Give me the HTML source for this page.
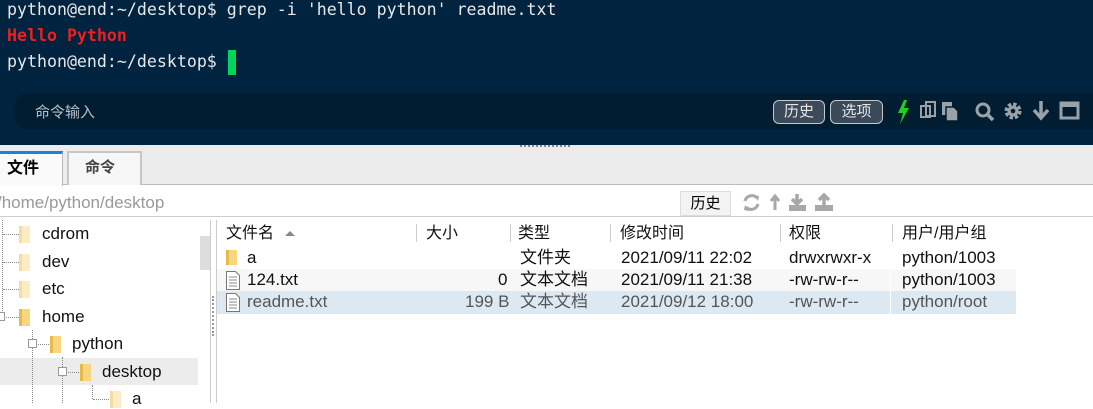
<!DOCTYPE html><html><head><meta charset="utf-8"><style>
*{margin:0;padding:0;box-sizing:border-box}
body{width:1093px;height:403px;overflow:hidden;background:#fff;position:relative;font-family:"Liberation Sans","Noto Sans CJK SC",sans-serif}
.a{position:absolute;white-space:nowrap;line-height:20px}
.term{left:0;top:0;width:1093px;height:145px;background:#00233f}
.mono{font-family:"DejaVu Sans Mono","Liberation Mono",monospace;font-size:16.6px;color:#e8e8e8}
.btn{border:1px solid #c8c8c8;border-radius:6px;background:#3a4a5a;color:#e6e6e6;font-size:15px;text-align:center;line-height:22px;height:24px}
.ic{fill:#9aa1a8}
.t{font-size:17px;color:#111}
.hd{font-size:16px;color:#111;top:224px}
.fold{position:absolute;width:11px;height:17px;background:linear-gradient(90deg,#e7b84a 0 3px,#f6d77f 3px)}
.fl{background:linear-gradient(90deg,#f3dca0 0 3px,#fbecc6 3px)}
.dot{position:absolute;border-top:1px dotted #888}
.dv{position:absolute;border-left:1px dotted #888}
.sep{position:absolute;top:224px;width:1px;height:18px;background:#ccc}
</style></head><body>
<div class="a term"></div>
<div class="a mono" style="left:7px;top:0px">python@end:~/desktop$ grep -i 'hello python' readme.txt</div>
<div class="a mono" style="left:7px;top:26px;color:#ef1f1f;font-weight:bold">Hello Python</div>
<div class="a mono" style="left:7px;top:52px">python@end:~/desktop$</div>
<div class="a" style="left:228px;top:50px;width:8px;height:25px;background:#00d35a"></div>
<div class="a" style="left:14px;top:93px;width:1079px;height:36px;background:#001d31;border-radius:14px 0 0 14px"></div>
<div class="a" style="left:35px;top:103px;color:#b8bfc6;font-size:15px">命令输入</div>
<div class="a btn" style="left:773px;top:100px;width:52px">历史</div>
<div class="a btn" style="left:830px;top:100px;width:53px">选项</div>
<svg class="a" style="left:890px;top:96px" width="200" height="32">
<path d="M14 4 L8 17 L13 17 L10 28 L19 12 L14 12 L17 4Z" fill="#1fd01f"/>
<g fill="none" stroke="#9aa1a8" stroke-width="2"><rect x="31" y="10" width="9" height="11"/><rect x="36" y="6" width="9" height="14"/></g>
<rect x="52" y="6" width="10" height="13" class="ic"/><path d="M56 11h8l4 4v10h-12z" fill="#9aa1a8" stroke="#001d31" stroke-width="1.5"/>
<circle cx="93" cy="14" r="6" fill="none" stroke="#9aa1a8" stroke-width="3"/><path d="M97 18l6 6" stroke="#9aa1a8" stroke-width="3.5"/>
<circle cx="123" cy="15" r="6" fill="none" stroke="#9aa1a8" stroke-width="5" stroke-dasharray="3 1.7"/><circle cx="123" cy="15" r="5.5" fill="#9aa1a8"/><circle cx="123" cy="15" r="2.3" fill="#001d31"/>
<path d="M151 5v15M144 14l7 8 7-8" fill="none" stroke="#9aa1a8" stroke-width="3.5"/>
<rect x="171" y="7" width="17" height="15" fill="none" stroke="#9aa1a8" stroke-width="3"/><rect x="171" y="7" width="17" height="4" fill="#9aa1a8"/>
</svg>
<div class="a" style="left:0;top:145px;width:1093px;height:40px;background:#ececec;border-bottom:1px solid #bbb"></div>
<div class="a" style="left:520px;top:145px;width:50px;height:2px;border-top:2px dotted #888"></div>
<div class="a" style="left:0;top:151px;width:63px;height:35px;background:#fafafa;border-top:3px solid #1a82e2;border-right:1px solid #bbb;font-size:16px;font-weight:bold;padding:5px 0 0 7px">文件</div>
<div class="a" style="left:67px;top:151px;width:75px;height:34px;background:#f7f7f7;border:2px solid #c6c6c6;border-bottom:none;font-size:15px;font-weight:bold;color:#444;padding:5px 0 0 16px">命令</div>
<div class="a" style="left:-3px;top:193px;font-size:17px;color:#999">/home/python/desktop</div>
<div class="a" style="left:680px;top:191px;width:51px;height:25px;background:#f3f3f3;border:1px solid #ddd;font-size:15px;text-align:center;line-height:24px">历史</div>
<svg class="a" style="left:740px;top:192px" width="100" height="22">
<path d="M5 9a7 7 0 0 1 12-3M18 12a7 7 0 0 1-12 3" fill="none" stroke="#a7a7a7" stroke-width="3"/><path d="M14 3l5 1-1 5zM9 19l-5-1 1-5z" fill="#a7a7a7"/>
<path d="M35 18V6M31 9l4-5 4 5" fill="none" stroke="#a7a7a7" stroke-width="3"/>
<path d="M57 2v9M52 7l5 5 5-5" fill="none" stroke="#a7a7a7" stroke-width="3.5"/><rect x="49" y="13" width="17" height="6" fill="#a7a7a7"/>
<path d="M84 13V4M79 8l5-5 5 5" fill="none" stroke="#a7a7a7" stroke-width="3.5"/><rect x="75" y="13" width="18" height="6" fill="#a7a7a7"/>
</svg>
<div class="a" style="left:0;top:216px;width:1093px;height:1px;background:#ccc"></div>
<div class="a" style="left:210px;top:220px;width:1px;height:183px;background:#ccc"></div>
<div class="a" style="left:216px;top:220px;width:1px;height:183px;background:#ccc"></div>
<div class="a" style="left:200px;top:236px;width:10px;height:34px;background:#ddd"></div>
<div class="a" style="left:212px;top:296px;height:40px;border-left:2px dotted #999"></div>
<div class="a" style="left:0;top:358px;width:198px;height:27px;background:#ececec"></div>
<div class="dv" style="left:2px;top:220px;height:97px"></div>
<div class="dv" style="left:32px;top:330px;height:73px"></div>
<div class="dv" style="left:62px;top:357px;height:46px"></div>
<div class="dv" style="left:92px;top:385px;height:14px"></div>
<div class="dot" style="left:3px;top:234px;width:16px"></div><div class="fold fl" style="left:19px;top:226px"></div><div class="a t" style="left:42px;top:224px">cdrom</div>
<div class="dot" style="left:3px;top:262px;width:16px"></div><div class="fold fl" style="left:19px;top:254px"></div><div class="a t" style="left:42px;top:252px">dev</div>
<div class="dot" style="left:3px;top:289px;width:16px"></div><div class="fold fl" style="left:19px;top:281px"></div><div class="a t" style="left:42px;top:279px">etc</div>
<div class="a" style="left:-4px;top:312px;width:9px;height:9px;border:1px solid #999;background:#fff"></div><div class="dot" style="left:6px;top:317px;width:13px"></div><div class="fold" style="left:19px;top:309px"></div><div class="a t" style="left:42px;top:307px">home</div>
<div class="a" style="left:28px;top:339px;width:9px;height:9px;border:1px solid #999;background:#fff"></div><div class="dot" style="left:38px;top:344px;width:11px"></div><div class="fold" style="left:50px;top:336px"></div><div class="a t" style="left:72px;top:334px">python</div>
<div class="a" style="left:58px;top:367px;width:9px;height:9px;border:1px solid #999;background:#fff"></div><div class="dot" style="left:68px;top:372px;width:11px"></div><div class="fold" style="left:80px;top:364px"></div><div class="a t" style="left:102px;top:362px">desktop</div>
<div class="dot" style="left:93px;top:399px;width:16px"></div><div class="fold fl" style="left:110px;top:391px"></div><div class="a t" style="left:132px;top:389px">a</div>
<div class="a hd" style="left:226px">文件名</div>
<svg class="a" style="left:284px;top:229px" width="12" height="8"><path d="M1 7L6 2 11 7Z" fill="#888"/></svg>
<div class="sep" style="left:416px"></div><div class="sep" style="left:510px"></div><div class="sep" style="left:610px"></div><div class="sep" style="left:780px"></div><div class="sep" style="left:892px"></div>
<div class="a hd" style="left:426px">大小</div><div class="a hd" style="left:518px">类型</div><div class="a hd" style="left:620px">修改时间</div><div class="a hd" style="left:789px">权限</div><div class="a hd" style="left:902px">用户/用户组</div>
<div class="a" style="left:217px;top:269px;width:799px;height:22px;background:#f7f7f7"></div>
<div class="a" style="left:217px;top:291px;width:799px;height:23px;background:#dde9f2"></div>
<div class="fold" style="left:226px;top:250px;height:15px"></div>
<svg class="a" style="left:225px;top:271px" width="16" height="42"><g fill="#fff" stroke="#777"><path d="M1.5 .5h9l4 4v14h-13z"/><path d="M1.5 22.5h9l4 4v14h-13z"/></g><g stroke="#888"><path d="M4 6h8M4 9h8M4 12h8M4 15h8M4 28h8M4 31h8M4 34h8M4 37h8"/></g></svg>
<div class="a t" style="left:247px;top:248px">a</div><div class="a t" style="left:520px;top:248px">文件夹</div><div class="a t" style="left:621px;top:248px">2021/09/11 22:02</div><div class="a t" style="left:789px;top:248px">drwxrwxr-x</div><div class="a t" style="left:902px;top:248px">python/1003</div>
<div class="a t" style="left:247px;top:270px">124.txt</div><div class="a t" style="left:498px;top:270px">0</div><div class="a t" style="left:520px;top:270px">文本文档</div><div class="a t" style="left:621px;top:270px">2021/09/11 21:38</div><div class="a t" style="left:789px;top:270px">-rw-rw-r--</div><div class="a t" style="left:902px;top:270px">python/1003</div>
<div class="a t" style="left:247px;top:292px;color:#555">readme.txt</div><div class="a t" style="left:465px;top:292px;color:#555">199 B</div><div class="a t" style="left:520px;top:292px;color:#555">文本文档</div><div class="a t" style="left:621px;top:292px;color:#555">2021/09/12 18:00</div><div class="a t" style="left:789px;top:292px;color:#555">-rw-rw-r--</div><div class="a t" style="left:902px;top:292px;color:#555">python/root</div>
<div class="a" style="left:890px;top:269px;width:1px;height:45px;background:#fff"></div>
</body></html>
